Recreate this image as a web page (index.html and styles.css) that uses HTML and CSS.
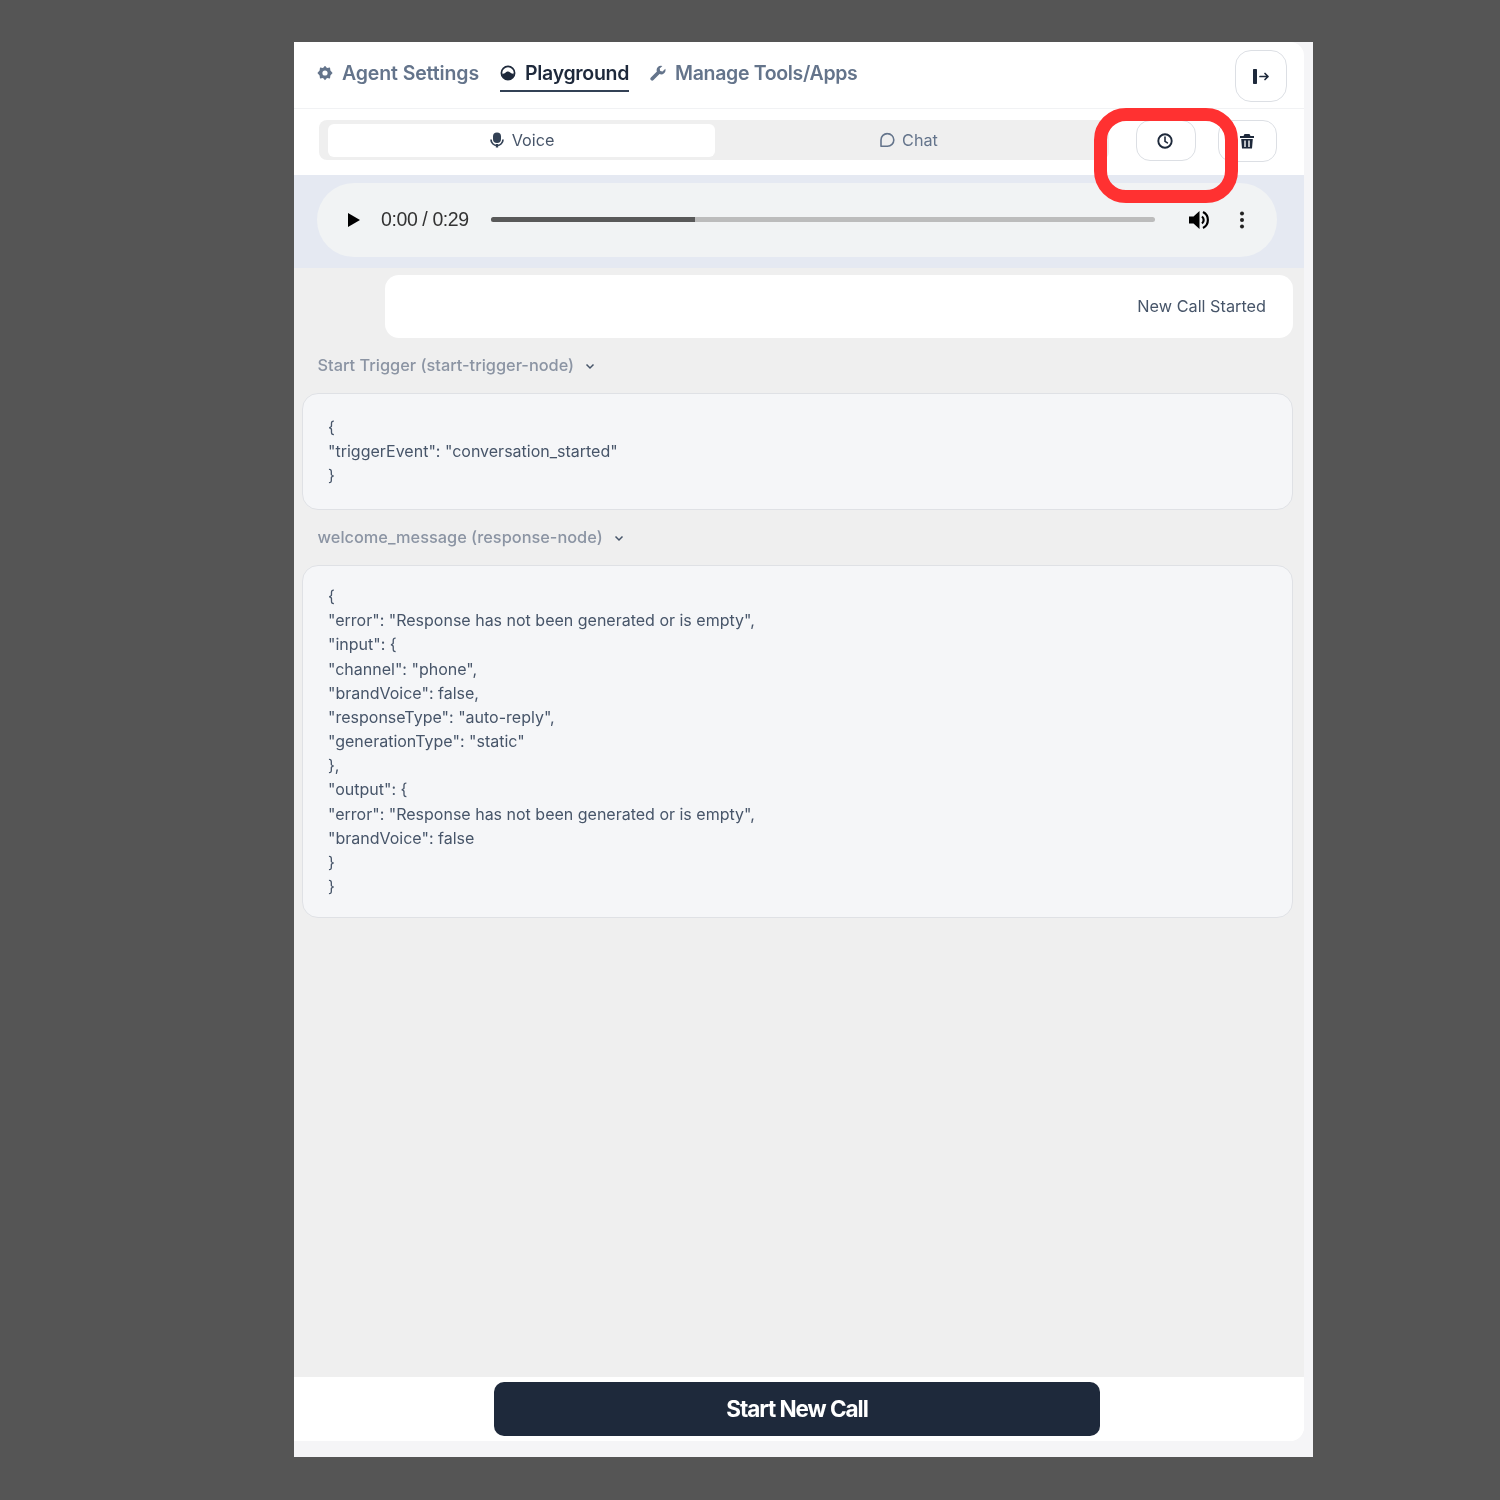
FILE: index.html
```html
<!DOCTYPE html>
<html lang="en">
<head>
<meta charset="utf-8">
<title>Playground</title>
<link rel="stylesheet" href="styles.css">
</head>
<body>
<div class="sheet">
  <div class="panel">
    <header class="topbar">
      <nav class="tabs">
        <a class="tab">
          <svg class="tab-icon" viewBox="0 0 16 16"><path fill="currentColor" fill-rule="evenodd" d="M8 .8l2 2.200 3-.4.4 3L15.600 8l-2.200 2.400-.4 3-3-.4L8 15.200 6 13l-3 .4-.4-3L.4 8l2.200-2.400.4-3 3 .4zM8 5.400a2.600 2.600 0 1 0 0 5.200 2.600 2.600 0 0 0 0-5.200z"/></svg>
          Agent Settings
        </a>
        <a class="tab tab-active">
          <svg class="tab-icon" viewBox="0 0 16 16"><circle cx="8" cy="8" r="6.600" fill="none" stroke="currentColor" stroke-width="1.700"/><path fill="currentColor" d="M2 8.600c2 .6 3-.4 3.600-1 .8-.9 1.600-1.100 2.400-1.100 1.600 0 2.400 1.300 3.200 1.800.9.500 1.900.4 2.800.3A6 6 0 0 1 2 8.600z"/></svg>
          <span class="tab-label">Playground</span>
        </a>
        <a class="tab tab-tight">
          <svg class="tab-icon" viewBox="0 0 16 16"><path fill="currentColor" d="M15.300 3.700l-2.800 2.700-2.300-.5-.5-2.300L12.400.9a4.400 4.400 0 0 0-5.500 5.700L.9 12.500a1.800 1.800 0 0 0 2.600 2.600l6-6a4.400 4.400 0 0 0 5.800-5.400z"/></svg>
          Manage Tools/Apps
        </a>
      </nav>
      <button class="icon-btn exit-btn" aria-label="Exit">
        <svg width="18" height="17" viewBox="0 0 18 17"><rect x="1" y="1" width="4" height="15" rx=".8" fill="#1e293b"/><path d="M8 8.500h8M13 5.500l3 3-3 3" fill="none" stroke="#1e293b" stroke-width="1.700" stroke-linecap="round" stroke-linejoin="round"/></svg>
      </button>
    </header>

    <section class="modebar">
      <div class="segments">
        <div class="segment segment-on">
          <svg class="seg-icon" viewBox="0 0 16 16"><rect x="4" y=".5" width="8" height="10.500" rx="4" fill="#334155"/><path d="M2 7.500a6 6 0 0 0 12 0" fill="none" stroke="#334155" stroke-width="1.700"/><rect x="6.800" y="12" width="2.400" height="3.500" fill="#334155"/></svg>
          Voice
        </div>
        <div class="segment">
          <svg class="seg-icon" viewBox="0 0 16 16"><path d="M8.500 1.600a6.300 6.300 0 0 1 0 12.600H2V7.900a6.300 6.300 0 0 1 6.500-6.300z" fill="none" stroke="#64748b" stroke-width="1.600" stroke-linejoin="round"/></svg>
          Chat
        </div>
      </div>
      <div class="actions">
        <button class="icon-btn action-btn history-btn" aria-label="History">
          <svg width="18" height="18" viewBox="0 0 18 18"><circle cx="9" cy="9" r="6.700" fill="none" stroke="#1e293b" stroke-width="1.900"/><path d="M9 5v4.300l2.400 1.600" fill="none" stroke="#1e293b" stroke-width="1.600" stroke-linecap="round"/></svg>
        </button>
        <button class="icon-btn action-btn trash-btn" aria-label="Delete">
          <svg width="16" height="16" viewBox="0 0 16 16"><path fill="#1e293b" fill-rule="evenodd" d="M5.500 1h5l1 2H15v2H1V3h3.500zM2.200 6h11.600l-.8 9.500H3zM5.300 7.500v6.500h1.400V7.500zm4 0v6.500h1.400V7.500z"/></svg>
        </button>
      </div>
    </section>

    <section class="player-wrap">
      <div class="player">
        <svg class="play" width="14" height="16" viewBox="0 0 14 16"><path d="M1 1l12 7-12 7z" fill="#000"/></svg>
        <span class="time">0:00 / 0:29</span>
        <div class="track"><div class="track-fill"></div></div>
        <svg class="volume" width="24" height="22" viewBox="0 0 24 22"><path d="M1 7.500h4.500L11.500 2v18l-6-5.500H1z" fill="#000"/><path d="M14 7.500a4.500 4.500 0 0 1 0 7" fill="none" stroke="#000" stroke-width="2.200"/><path d="M15 3a9 9 0 0 1 0 16" fill="none" stroke="#000" stroke-width="2.200"/></svg>
        <svg class="kebab" width="6" height="20" viewBox="0 0 6 20"><circle cx="3" cy="3.500" r="2" fill="#222"/><circle cx="3" cy="10" r="2" fill="#222"/><circle cx="3" cy="16.500" r="2" fill="#222"/></svg>
      </div>
    </section>

    <main class="log">
      <div class="bubble">New Call Started</div>

      <div class="node-label">Start Trigger (start-trigger-node)
        <svg class="caret" width="10" height="7" viewBox="0 0 10 7"><path d="M1.500 1.500L5 5l3.500-3.500" fill="none" stroke="#475569" stroke-width="1.500"/></svg>
      </div>
      <pre class="code-box code-short">{
"triggerEvent": "conversation_started"
}</pre>

      <div class="node-label">welcome_message (response-node)
        <svg class="caret" width="10" height="7" viewBox="0 0 10 7"><path d="M1.500 1.500L5 5l3.500-3.500" fill="none" stroke="#475569" stroke-width="1.500"/></svg>
      </div>
      <pre class="code-box code-long">{
"error": "Response has not been generated or is empty",
"input": {
"channel": "phone",
"brandVoice": false,
"responseType": "auto-reply",
"generationType": "static"
},
"output": {
"error": "Response has not been generated or is empty",
"brandVoice": false
}
}</pre>
    </main>

    <footer class="footer">
      <button class="start-btn">Start New Call</button>
    </footer>
  </div>
</div>
<div class="annotation"></div>
</body>
</html>
```

FILE: styles.css
```css
* { box-sizing: border-box; }

html, body { margin: 0; padding: 0; }

body {
  width: 1500px;
  height: 1500px;
  background: #555555;
  padding: 42px 0 0 294px;
  font-family: Inter, "Liberation Sans", sans-serif;
  position: relative;
  overflow: hidden;
}

.sheet {
  width: 1019px;
  height: 1415px;
  background: #f5f5f7;
  filter: blur(0.6px);
}

.panel {
  width: 1010px;
  height: 1399px;
  display: flex;
  flex-direction: column;
  background: #fff;
  border-radius: 0 14px 14px 0;
  overflow: hidden;
}

.topbar {
  height: 67px;
  flex: none;
  display: flex;
  align-items: flex-start;
  justify-content: space-between;
  padding: 7px 17px 0 23px;
  border-bottom: 1px solid #f1f2f4;
}

.tabs { display: flex; gap: 21px; }

.tab {
  display: flex;
  align-items: center;
  gap: 9px;
  height: 43px;
  padding-top: 4px;
  font-size: 19.500px;
  font-weight: 600;
  letter-spacing: -0.12px;
  color: #64748b;
}

.tab-icon { width: 16px; height: 16px; flex: none; }

.tab-active {
  color: #1e293b;
  border-bottom: 2px solid #334155;
  height: 43px;
  padding-top: 6px;
  letter-spacing: -0.3px;
}

.tab-tight { letter-spacing: -0.33px; }

.icon-btn {
  background: #fff;
  border: 1.500px solid #dcdfe4;
  display: flex;
  align-items: center;
  justify-content: center;
  padding: 0;
}

.exit-btn {
  width: 52px;
  height: 52px;
  border-radius: 16px;
  margin-top: 1px;
}

.modebar {
  height: 66px;
  flex: none;
  display: flex;
  align-items: flex-start;
  padding: 11px 27px 0 25px;
}

.segments {
  width: 790px;
  height: 40px;
  display: flex;
  background: #efefef;
  border-radius: 8px;
  padding: 4px 0 3px 9px;
}

.segment {
  width: 387px;
  display: flex;
  align-items: center;
  justify-content: center;
  gap: 7px;
  padding-bottom: 2px;
  font-size: 16.200px;
  color: #64748b;
  border-radius: 6px;
}

.segment-on { background: #fff; color: #475569; }

.seg-icon { width: 16px; height: 16px; flex: none; }

.actions {
  display: flex;
  gap: 22px;
  margin-left: auto;
}

.action-btn { height: 42px; border-radius: 14px; }

.history-btn { width: 60px; height: 41px; padding-right: 2px; }

.trash-btn {
  width: 59px;
  justify-content: flex-start;
  padding-left: 20px;
}

.player-wrap {
  height: 93px;
  flex: none;
  background: #e5e9f2;
  padding: 8px 27px 0 23px;
}

.player {
  height: 74px;
  background: #f1f3f4;
  border-radius: 37px;
  display: flex;
  align-items: center;
  padding: 0 32px 0 30px;
}

.play { flex: none; }

.time {
  margin-left: 20px;
  margin-bottom: 2px;
  font-family: "Liberation Sans", Arial, sans-serif;
  font-size: 19.500px;
  letter-spacing: -0.4px;
  color: #333;
  white-space: nowrap;
}

.track {
  margin-left: 22px;
  margin-bottom: 1px;
  width: 664px;
  height: 5px;
  border-radius: 3px;
  background: #bcbcbc;
}

.track-fill {
  width: 204px;
  height: 100%;
  border-radius: 3px 0 0 3px;
  background: #595959;
}

.volume { margin-left: 33px; flex: none; }

.kebab { margin-left: 27px; flex: none; }

.log {
  flex: 1;
  background: #efefef;
  padding: 7px 11px 0 8px;
  display: flex;
  flex-direction: column;
  align-items: stretch;
}

.bubble {
  margin-left: 83px;
  height: 63px;
  background: #fff;
  border-radius: 14px;
  padding: 0 27px 2px 28px;
  display: flex;
  align-items: center;
  justify-content: flex-end;
  font-size: 16.250px;
  color: #475569;
}

.node-label {
  height: 55px;
  padding: 0 0 2px 15.500px;
  display: flex;
  align-items: center;
  gap: 11px;
  font-size: 16.350px;
  color: #8b94a3;
  font-weight: 500;
}

.caret { flex: none; margin-top: 3px; }

.code-box {
  margin: 0;
  background: #f5f6f8;
  border: 1.500px solid #dfe1e5;
  border-radius: 16px;
  padding: 0 25px;
  font-family: Inter, "Liberation Sans", sans-serif;
  font-size: 16px;
  line-height: 24.170px;
  color: #475569;
}

.code-short { height: 117px; padding-top: 21px; }

.code-long { height: 353px; padding-top: 18px; }

.footer {
  height: 64px;
  flex: none;
  background: #fff;
  display: flex;
  justify-content: center;
  padding-top: 5px;
  padding-right: 4px;
}

.start-btn {
  width: 606px;
  height: 54px;
  padding-bottom: 3px;
  background: #1e293b;
  color: #fff;
  border: none;
  border-radius: 10px;
  font-family: Inter, "Liberation Sans", sans-serif;
  font-size: 22.500px;
  font-weight: 700;
  letter-spacing: -1.030px;
}

.annotation {
  position: absolute;
  left: 1094px;
  top: 108px;
  width: 144px;
  height: 95px;
  border: 13px solid #ff3131;
  border-radius: 32px;
}
```
